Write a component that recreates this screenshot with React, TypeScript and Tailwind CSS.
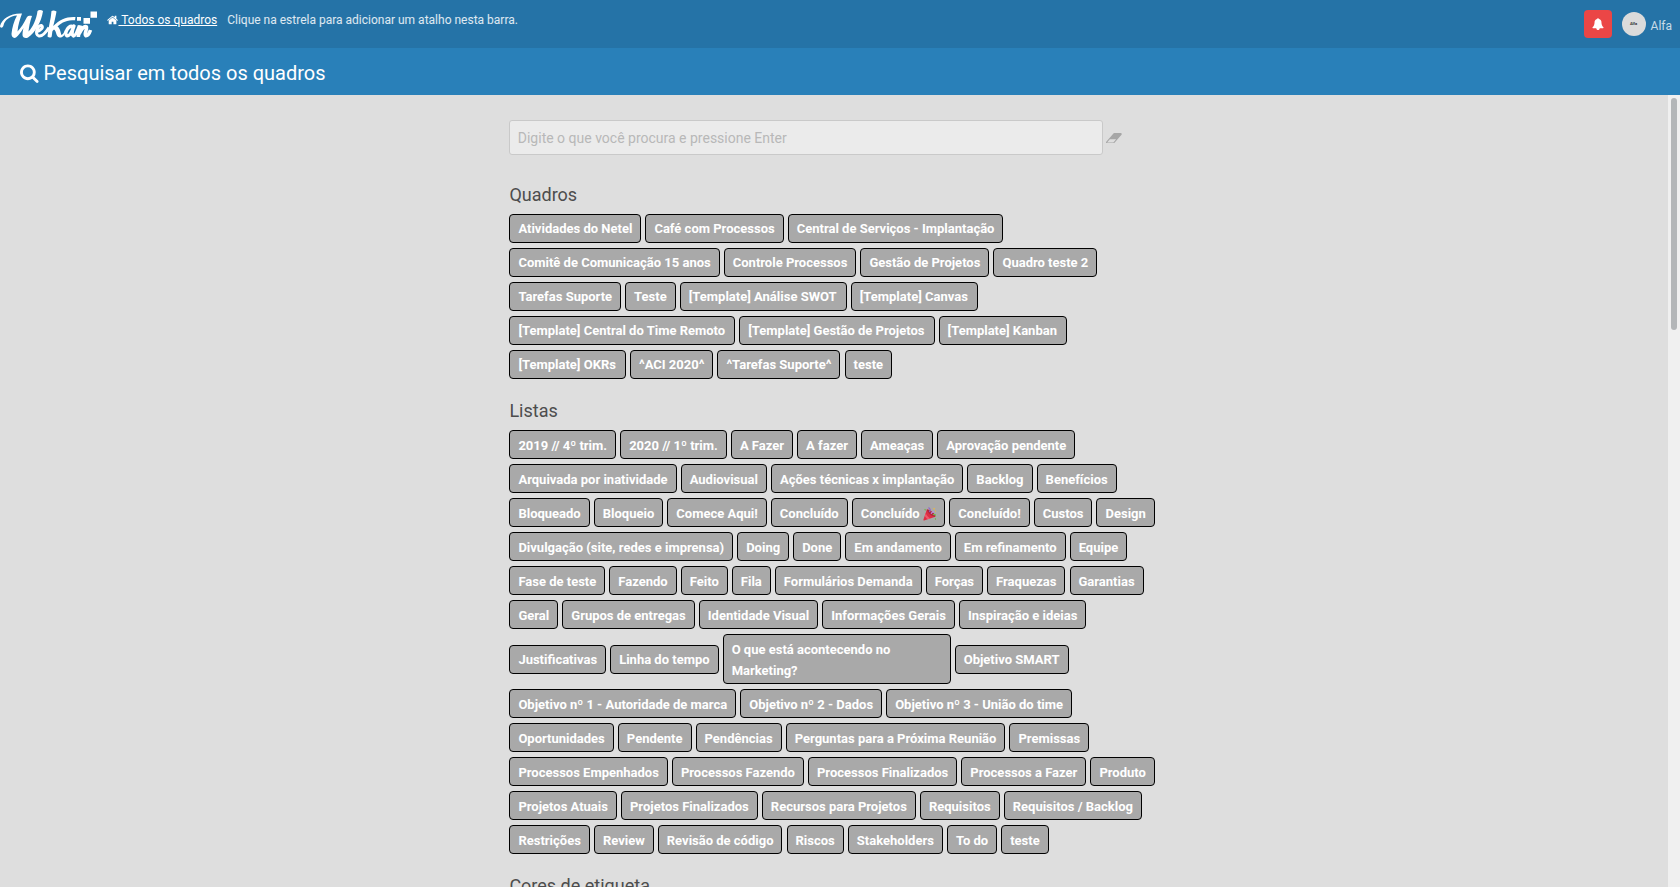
const boards: string[][] = [
  ["Atividades do Netel", "Café com Processos", "Central de Serviços - Implantação"],
  ["Comitê de Comunicação 15 anos", "Controle Processos", "Gestão de Projetos", "Quadro teste 2"],
  ["Tarefas Suporte", "Teste", "[Template] Análise SWOT", "[Template] Canvas"],
  ["[Template] Central do Time Remoto", "[Template] Gestão de Projetos", "[Template] Kanban"],
  ["[Template] OKRs", "^ACI 2020^", "^Tarefas Suporte^", "teste"],
];

const lists: string[][] = [
  ["2019 // 4º trim.", "2020 // 1º trim.", "A Fazer", "A fazer", "Ameaças", "Aprovação pendente"],
  ["Arquivada por inatividade", "Audiovisual", "Ações técnicas x implantação", "Backlog", "Benefícios"],
  ["Bloqueado", "Bloqueio", "Comece Aqui!", "Concluído", "Concluído 🎉", "Concluído!", "Custos", "Design"],
  ["Divulgação (site, redes e imprensa)", "Doing", "Done", "Em andamento", "Em refinamento", "Equipe"],
  ["Fase de teste", "Fazendo", "Feito", "Fila", "Formulários Demanda", "Forças", "Fraquezas", "Garantias"],
  ["Geral", "Grupos de entregas", "Identidade Visual", "Informações Gerais", "Inspiração e ideias"],
  ["Justificativas", "Linha do tempo", "O que está acontecendo no Marketing?", "Objetivo SMART"],
  ["Objetivo nº 1 - Autoridade de marca", "Objetivo nº 2 - Dados", "Objetivo nº 3 - União do time"],
  ["Oportunidades", "Pendente", "Pendências", "Perguntas para a Próxima Reunião", "Premissas"],
  ["Processos Empenhados", "Processos Fazendo", "Processos Finalizados", "Processos a Fazer", "Produto"],
  ["Projetos Atuais", "Projetos Finalizados", "Recursos para Projetos", "Requisitos", "Requisitos / Backlog"],
  ["Restrições", "Review", "Revisão de código", "Riscos", "Stakeholders", "To do", "teste"],
];

function Popper() {
  return (
    <svg className="mb-[2px] inline-block h-[14px] w-[13.5px] align-middle" viewBox="0 0 14 14" role="img" aria-label="🎉">
      <path fill="#dd2e44" d="M4 2.4L0.4 13C0.3 13.7 0.6 13.9 1.200 13.700L12.800 9.900C12 6.500 8 2.500 4 2.400Z" />
      <path fill="#b3243a" d="M4 2.400C6.500 1.800 12.600 6.500 12.800 9.900C10 10.400 4 5.500 4 2.400Z" />
      <path fill="#f0566b" d="M2.900 6.200L1.900 9C3 11 4.200 12.200 5.800 12.300L7.500 11.700C5.500 10.500 3.800 8.600 2.900 6.200Z" />
      <path fill="none" stroke="#9266cc" strokeWidth="1.3" d="M5.600 0.400C7.600 1.200 7.800 3 6.800 5" />
      <path fill="none" stroke="#b98be0" strokeWidth="1.2" d="M8.400 6.800C9 5.200 10 4.600 11.600 4.600" />
      <path fill="none" stroke="#77b255" strokeWidth="1.3" d="M10.200 7.800C11.600 7 13 7.600 13.600 9M1.600 2L3 3.200M12.600 11.400L13.400 13" />
      <path fill="#e8b84a" d="M10.800 0.800h1.500v1.500h-1.500zM12.400 3.400h1.300v1.300h-1.300z" />
    </svg>
  );
}

function Chip({ label, spacing }: { label: string; spacing: string }) {
  const wraps = label.startsWith("O que");
  const festive = label.endsWith("🎉");
  const template = label.startsWith("[");
  return (
    <span
      className={`rounded-[4px] border border-black bg-[#a9a9a9] pl-2 text-[13px] leading-[21px] font-bold text-white ${
        wraps ? "w-[228px]" : "whitespace-nowrap"
      } ${festive ? "h-[29px]" : ""} ${template ? "pr-[9px]" : "pr-2"} ${wraps ? "pt-[4px] pb-[2px]" : spacing}`}
    >
      {festive ? label.replace("🎉", "") : label}
      {festive && <Popper />}
    </span>
  );
}

function Section({ title, rows, low = false }: { title: string; rows: string[][]; low?: boolean }) {
  return (
    <section className="mb-[20px]">
      <h2 className="mb-[7px] h-[24px] text-[18px] leading-[24px] text-[#4d4d4d]">{title}</h2>
      <div className="flex flex-col gap-[5px]">
        {rows.map((row, i) => {
          const spacing = low && row[0] !== "Justificativas" ? "pt-[4px] pb-[2px]" : "py-[3px]";
          return (
            <div key={i} className="flex items-center gap-[4.05px]">
              {row.map((label) => (
                <Chip key={label} label={label} spacing={spacing} />
              ))}
            </div>
          );
        })}
      </div>
    </section>
  );
}

function Logo() {
  return (
    <svg className="block h-[48px] w-[98px] shrink-0" viewBox="0 0 98 48" fill="none" stroke="#fff" strokeLinejoin="round">
      <path fill="#fff" stroke="none" d="M0 26C2 19 10 13 22 13.5C20 19 18 25 17.5 31.500C21 28 24 23 27 17C28 15.5 30.500 15.5 32 16C30 21 29 27 28.5 31.500C33 27 36.500 19 37.500 11C39 9.500 41.500 10 43 11C41.500 22 35 33 28 37.5C25.500 38.700 22.500 37.700 22.500 35C22.500 32 23 30 23.500 28C21 32 18.500 35.500 16 37.500C13.500 38.700 11.500 37 11.500 34C12 28 14 21 17 15.5C10 16 4.500 20 3.500 25.5C2.500 28.5 0 28 0 26Z" />
      <path strokeWidth="3" d="M36 32C41 30.500 44 27 41.500 25.500C37.500 24.500 34 35 39 36C43 36.500 46.500 31.500 49 27.500" />
      <path fill="#fff" stroke="none" d="M51.500 11C53 10 55 10.500 56.500 11.500C55.500 17 54.500 22 53.200 26C60 19.500 66 16.500 75.500 17L75 20.200C67 20.200 62 22 57.500 26.500C60.500 28.500 60.500 33 61.500 35C63 34.500 64 32.500 65 30L66 31C65 35 62.500 38 59.500 37.500C56 37 56.500 31 54 29.500L52.500 31C52 33 52 35.500 51.500 37C50 38 48.500 37.500 47.500 36.500C48 28 51 19 51.500 11Z" />
      <path strokeWidth="3.4" d="M73 26.500C68 24.500 64 34 67 35.800C70 36.500 72.500 30 74 26C72.500 30 71.500 35 73.500 36C75.500 36 77.500 31 79.500 25.500" />
      <path strokeWidth="3.6" d="M80.500 25.500C80 29 78.500 33 78.300 37M79 34C82 28 84.500 25.500 86.500 27C87.500 29 83.500 34.500 86 35.800C88 35.800 89.500 33 90.500 30" />
      <path fill="#fff" stroke="none" d="M90.500 11.500h6.500v6.300h-6.500zM83.500 18h6.500v5.800h-6.500zM77 17h4v3.700h-4z" />
    </svg>
  );
}

function HomeIcon() {
  return (
    <svg className="h-[12px] w-[11.1px]" viewBox="64 0 1664 1792" fill="currentColor">
      <path d="M1472 992v480q0 26-19 45t-45 19h-384v-384h-256v384h-384q-26 0-45-19t-19-45v-480q0-1 .5-3t.5-3l575-474 575 474q1 2 1 6zm223-69l-62 74q-8 9-21 11h-3q-13 0-21-7l-692-577-692 577q-12 8-24 7-13-2-21-11l-62-74q-8-10-7-23.500t11-21.500l719-599q32-26 76-26t76 26l244 204v-195q0-14 9-23t23-9h192q14 0 23 9t9 23v408l219 182q10 8 11 21.500t-7 23.500z" />
    </svg>
  );
}

function SearchIcon() {
  return (
    <svg className="h-[20px] w-[18.6px]" viewBox="64 0 1664 1792" fill="currentColor">
      <path d="M1216 832q0-185-131.500-316.500t-316.500-131.500-316.500 131.500-131.500 316.500 131.500 316.500 316.500 131.500 316.500-131.500 131.500-316.500zm512 832q0 52-38 90t-90 38q-54 0-90-38l-343-342q-179 124-399 124-143 0-273.500-55.500t-225-150-150-225-55.500-273.500 55.500-273.500 150-225 225-150 273.500-55.500 273.500 55.500 225 150 150 225 55.500 273.500q0 220-124 399l343 343q37 37 37 90z" />
    </svg>
  );
}

function BellIcon() {
  return (
    <svg className="size-[12px]" viewBox="0 0 1792 1792" fill="currentColor">
      <path d="M1728 1408q0 52-38 90t-90 38h-448q0 106-75 181t-181 75-181-75-75-181h-448q-52 0-90-38t-38-90q50-42 91-88t85-119.500 74.500-158.500 50-206 19.500-260q0-152 117-282.500t307-158.500q-8-19-8-39 0-40 28-68t68-28 68 28 28 68q0 20-8 39 190 28 307 158.500t117 282.500q0 139 19.500 260t50 206 74.500 158.500 85 119.500 91 88z" />
    </svg>
  );
}

function EraserIcon() {
  return (
    <svg className="h-[10.500px] w-[15.800px]" viewBox="64 256 1920 1280" fill="currentColor">
      <path d="M960 1408l336-384h-768l-336 384h768zm1013-1077q15 34 9.500 71.500t-30.500 65.500l-896 1024q-38 44-96 44h-768q-38 0-69.500-20.500t-47.500-54.500q-15-34-9.500-71.500t30.500-65.500l896-1024q38-44 96-44h768q38 0 69.500 20.500t47.500 54.500z" />
    </svg>
  );
}

export default function App() {
  return (
    <div className="flex h-[887px] w-full flex-col overflow-hidden bg-[#dedede] font-[Roboto,sans-serif] text-[14px] text-[#4d4d4d]">
      <header className="flex h-[48px] shrink-0 bg-[#2573a7] text-white">
        <Logo />
        <nav className="flex h-[40px] items-center pl-[9.4px] text-[12px] leading-[18px]">
          <HomeIcon />
          <a className="whitespace-pre underline"> Todos os quadros</a>
          <span className="ml-[10px] text-white/85">Clique na estrela para adicionar um atalho nesta barra.</span>
        </nav>
        <div className="ml-auto flex items-center pr-2">
          <span className="flex size-[28px] items-center justify-center rounded-[4px] bg-[#eb4646]">
            <BellIcon />
          </span>
          <span className="ml-[10px] flex size-[24px] items-center justify-center rounded-full bg-[#dbdbdb] text-[4px] font-bold text-[#333]">
            Alfa
          </span>
          <span className="mt-[3px] ml-[5px] text-[12px] text-white/75">Alfa</span>
        </div>
      </header>
      <div className="flex h-[47px] shrink-0 items-center bg-[#2980b9] pt-[2px] pl-5 text-white">
        <SearchIcon />
        <h1 className="ml-[5px] text-[20px] leading-[28px]">Pesquisar em todos os quadros</h1>
      </div>
      <div className="flex min-h-0 flex-1">
        <main className="min-w-0 flex-1 overflow-hidden pt-[25px] pl-[509.4px]">
          <div className="mb-[28px] flex items-center">
            <div className="flex h-[35px] w-[594px] items-center rounded-[3px] border border-[#c9c9c9] bg-[#ebebeb] pt-[2px] pl-[7.4px] text-[14px] text-[#b8b8b8]">
              Digite o que você procura e pressione Enter
            </div>
            <div className="pt-px pl-[3px] text-[#a6a6a6]">
              <EraserIcon />
            </div>
          </div>
          <Section title="Quadros" rows={boards} />
          <Section title="Listas" rows={lists} low />
          <Section title="Cores de etiqueta" rows={[]} />
        </main>
        <div className="w-[12px] bg-[#f0f0f0] pt-[3px] pl-[3px]">
          <div className="h-[232px] w-[6px] rounded-full bg-[#b3b6b8]" />
        </div>
      </div>
    </div>
  );
}
